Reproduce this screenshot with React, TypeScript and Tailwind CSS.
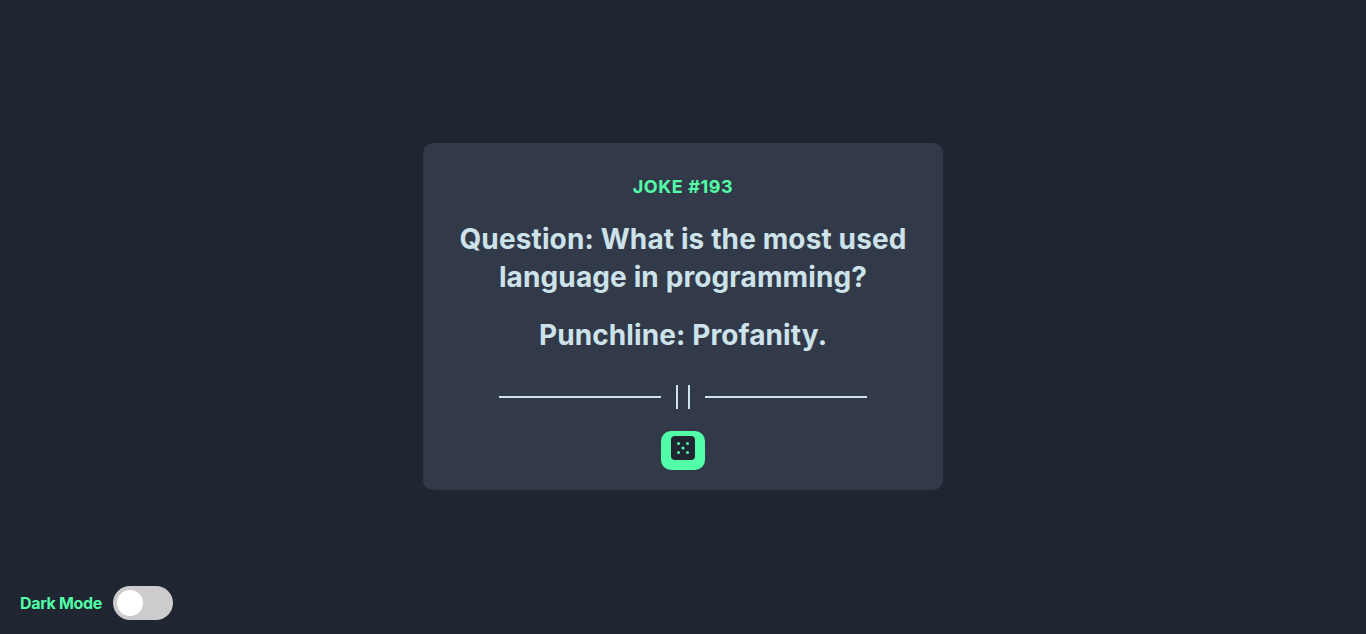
export default function App() {
  return (
    <div className="relative flex h-screen items-center justify-center bg-[#1f2632] pb-px font-['Inter',sans-serif]">
      {/* Joke card */}
      <div className="flex w-[520px] flex-col items-center rounded-[10px] bg-[#323a49] px-[30px] pb-5 pt-8 text-center">
        <p className="text-[18px] font-bold leading-[24px] tracking-[0.6px] text-[#52ffa8]">JOKE #193</p>
        <p className="mt-[21px] text-[28px] font-bold leading-[38px] tracking-[0.12px] text-[#cee3e9]">
          Question: What is the most used
          <br />
          language in programming?
        </p>
        <p className="mt-5 text-[28px] font-bold leading-[38px] tracking-[0.1px] text-[#cee3e9]">Punchline: Profanity.</p>

        {/* Divider */}
        <div className="mt-[31px] flex h-6 items-center">
          <div className="h-0.5 w-[162px] bg-[#cee3e9]" />
          <div className="mx-[15px] flex h-6 w-[14px] justify-between">
            <div className="h-6 w-0.5 bg-[#cee3e9]" />
            <div className="h-6 w-0.5 bg-[#cee3e9]" />
          </div>
          <div className="h-0.5 w-[162px] bg-[#cee3e9]" />
        </div>

        {/* Dice button */}
        <button className="mt-[22px] flex h-[39px] w-11 justify-center rounded-[10px] bg-[#52ffa8] pt-[5px]">
          <svg width="24" height="24" viewBox="0 0 24 24">
            <rect width="24" height="24" rx="4" fill="#1f2632" />
            <circle cx="7.5" cy="7.5" r="1.5" fill="#52ffa8" />
            <circle cx="16.5" cy="7.5" r="1.5" fill="#52ffa8" />
            <circle cx="12" cy="12" r="1.5" fill="#52ffa8" />
            <circle cx="7.5" cy="16.5" r="1.5" fill="#52ffa8" />
            <circle cx="16.5" cy="16.5" r="1.5" fill="#52ffa8" />
          </svg>
        </button>
      </div>

      {/* Theme toggle */}
      <div className="absolute bottom-[14px] left-5 flex items-center gap-[11px]">
        <span className="text-[16px] font-bold tracking-[-0.35px] text-[#52ffa8]">Dark Mode</span>
        <div className="flex h-[34px] w-[60px] items-center rounded-full bg-[#cccccc] pl-1">
          <div className="h-[26px] w-[26px] rounded-full bg-white" />
        </div>
      </div>
    </div>
  );
}
